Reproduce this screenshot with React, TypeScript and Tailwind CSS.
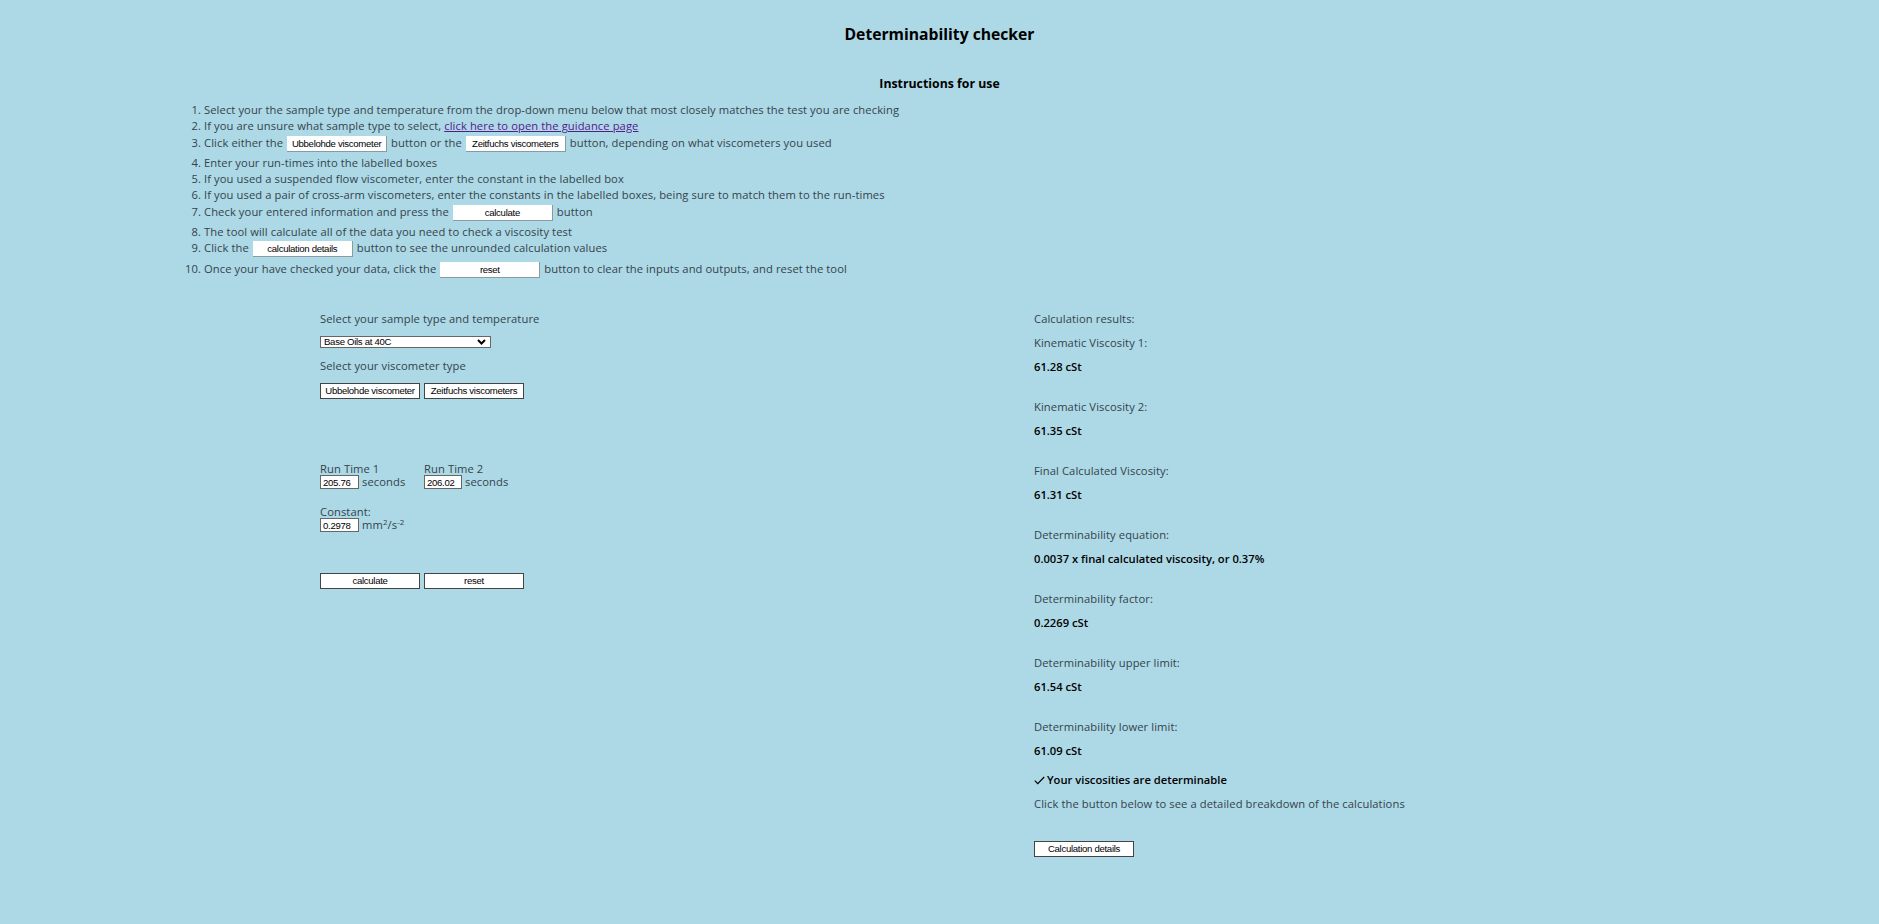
const controlFont = "font-['Liberation_Sans',Arial,sans-serif] text-[9.6px] tracking-[-0.3px] text-black";
const inlineBtn = `inline-block whitespace-nowrap bg-white border-b border-r border-[#8a9aa2] text-center leading-[15px] align-middle ${controlFont}`;
const formBtn = `w-[100px] h-[16px] whitespace-nowrap bg-white border border-[#444] text-center leading-[14px] p-0 ${controlFont}`;
const inputCls = `h-[14px] bg-white border border-[#666] px-[2px] leading-[12px] outline-none ${controlFont}`;
const line = "h-[14px] leading-[16px]";

function Inline({ children }: { children: React.ReactNode }) {
  return <span className={`${inlineBtn} w-[100px] h-[16px] mx-[1px]`}>{children}</span>;
}

function Result({ label, value, last }: { label: string; value: string; last?: boolean }) {
  return (
    <div className={last ? "" : "mb-[26px]"}>
      <p className={`${line} mb-[10px]`}>{label}</p>
      <p className={`${line} font-semibold text-black tracking-normal`}>{value}</p>
    </div>
  );
}

export default function App() {
  return (
    <div className="min-h-[924px] bg-[#add8e6] text-[#33444c] text-[11.2px] tracking-[0.09px] font-['Open_Sans','Noto_Sans',sans-serif]">
      <h1 className="pt-[24px] h-[48px] text-center text-[15.7px] tracking-normal leading-[20px] font-bold text-black">Determinability checker</h1>
      <h2 className="mt-[28px] text-center text-[12.3px] tracking-normal leading-[16px] font-bold text-black">Instructions for use</h2>
      <ol className="mt-[10px] ml-[204px] list-decimal">
        <li className="h-[16px] leading-[16px]">Select your the sample type and temperature from the drop-down menu below that most closely matches the test you are checking</li>
        <li className="h-[16px] leading-[16px]">If you are unsure what sample type to select, <a className="underline text-[#551a8b]" href="#">click here to open the guidance page</a></li>
        <li className="h-[20px] leading-[18px]">Click either the <Inline>Ubbelohde viscometer</Inline> button or the <Inline>Zeitfuchs viscometers</Inline> button, depending on what viscometers you used</li>
        <li className="h-[16px] leading-[16px] mt-[1px]">Enter your run-times into the labelled boxes</li>
        <li className="h-[16px] leading-[16px]">If you used a suspended flow viscometer, enter the constant in the labelled box</li>
        <li className="h-[16px] leading-[16px]">If you used a pair of cross-arm viscometers, enter the constants in the labelled boxes, being sure to match them to the run-times</li>
        <li className="h-[20px] leading-[18px]">Check your entered information and press the <Inline>calculate</Inline> button</li>
        <li className="h-[16px] leading-[16px] mt-[1px]">The tool will calculate all of the data you need to check a viscosity test</li>
        <li className="h-[18px] leading-[16px]">Click the <Inline>calculation details</Inline> button to see the unrounded calculation values</li>
        <li className="h-[20px] leading-[20px] mt-[1px]">Once your have checked your data, click the <Inline>reset</Inline> button to clear the inputs and outputs, and reset the tool</li>
      </ol>
      <div className="mt-[32px] ml-[320px] flex">
        <div className="w-[714px] shrink-0">
          <p className={line}>Select your sample type and temperature</p>
          <div className={`mt-[11px] w-[171px] h-[12px] bg-white border border-[#666] flex items-center justify-between pl-[3px] pr-[4px] ${controlFont}`}>
            <span>Base Oils at 40C</span>
            <svg width="9" height="6" viewBox="0 0 9 6"><path d="M1 1l3.5 3.5L8 1" fill="none" stroke="#000" strokeWidth="2" /></svg>
          </div>
          <p className={`mt-[10px] ${line}`}>Select your viscometer type</p>
          <div className="mt-[11px] flex gap-[4px]">
            <button className={formBtn}>Ubbelohde viscometer</button>
            <button className={formBtn}>Zeitfuchs viscometers</button>
          </div>
          <div className="mt-[62px] flex">
            <div className="w-[104px]">
              <p className={line}>Run Time 1</p>
              <div className="flex items-center gap-[3px] h-[14px]"><input readOnly value="205.76" className={`${inputCls} w-[39px]`} /><span>seconds</span></div>
            </div>
            <div>
              <p className={line}>Run Time 2</p>
              <div className="flex items-center gap-[3px] h-[14px]"><input readOnly value="206.02" className={`${inputCls} w-[38px]`} /><span>seconds</span></div>
            </div>
          </div>
          <div className="mt-[15px]">
            <p className={line}>Constant:</p>
            <div className="flex items-center gap-[3px] h-[14px]"><input readOnly value="0.2978" className={`${inputCls} w-[39px]`} /><span>mm<sup className="text-[8px]">2</sup>/s<sup className="text-[8px]">-2</sup></span></div>
          </div>
          <div className="mt-[41px] flex gap-[4px]">
            <button className={formBtn}>calculate</button>
            <button className={formBtn}>reset</button>
          </div>
        </div>
        <div>
          <p className={`${line} mb-[10px]`}>Calculation results:</p>
          <Result label="Kinematic Viscosity 1:" value="61.28 cSt" />
          <Result label="Kinematic Viscosity 2:" value="61.35 cSt" />
          <Result label="Final Calculated Viscosity:" value="61.31 cSt" />
          <Result label="Determinability equation:" value="0.0037 x final calculated viscosity, or 0.37%" />
          <Result label="Determinability factor:" value="0.2269 cSt" />
          <Result label="Determinability upper limit:" value="61.54 cSt" />
          <Result label="Determinability lower limit:" value="61.09 cSt" last />
          <p className="mt-[16px] h-[14px] leading-[14px] font-semibold text-black tracking-normal flex items-center gap-[2px]">
            <svg width="11" height="9" viewBox="0 0 11 9"><path d="M0.8 4.6l3 3L10.2 1" fill="none" stroke="#000" strokeWidth="1.2" /></svg>
            Your viscosities are determinable
          </p>
          <p className="mt-[10px] h-[14px] leading-[14px]">Click the button below to see a detailed breakdown of the calculations</p>
          <button className={`${formBtn} mt-[30px] block`}>Calculation details</button>
        </div>
      </div>
    </div>
  );
}
